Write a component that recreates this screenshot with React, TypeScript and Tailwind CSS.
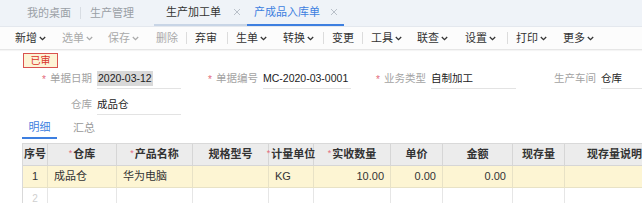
import React from "react";

const F = { fontFamily: '"Liberation Sans", "Noto Sans CJK SC", sans-serif' };

function Chev() {
  return (
    <svg width="7" height="5" viewBox="0 0 7 5" className="ml-[2px] mt-[1px]">
      <path d="M0.8 1 L3.5 3.7 L6.2 1" fill="none" stroke="currentColor" strokeWidth="1.3" />
    </svg>
  );
}

function X() {
  return (
    <svg width="8" height="8" viewBox="0 0 8 8">
      <path d="M1 1 L7 7 M7 1 L1 7" stroke="#b9c0c9" strokeWidth="1" />
    </svg>
  );
}

type TB = { t: string; c?: boolean; dis?: boolean; sepAfter?: boolean; w: number };

const tools: TB[] = [
  { t: "新增", c: true, w: 47 },
  { t: "选单", c: true, dis: true, w: 46 },
  { t: "保存", c: true, dis: true, w: 48 },
  { t: "删除", dis: true, w: 32, sepAfter: true },
  { t: "弃审", w: 34, sepAfter: true },
  { t: "生单", c: true, w: 47 },
  { t: "转换", c: true, w: 42, sepAfter: true },
  { t: "变更", w: 32, sepAfter: true },
  { t: "工具", c: true, w: 46 },
  { t: "联查", c: true, w: 48 },
  { t: "设置", c: true, w: 44, sepAfter: true },
  { t: "打印", c: true, w: 47 },
  { t: "更多", c: true, w: 40 },
];

const cols: { t: string; w: number; req?: boolean }[] = [
  { t: "序号", w: 25 },
  { t: "仓库", w: 69, req: true },
  { t: "产品名称", w: 76, req: true },
  { t: "规格型号", w: 76 },
  { t: "计量单位", w: 45, req: true },
  { t: "实收数量", w: 77, req: true },
  { t: "单价", w: 52 },
  { t: "金额", w: 70 },
  { t: "现存量", w: 52 },
  { t: "现存量说明", w: 100 },
];

function Field({
  label,
  req,
  value,
  labelW,
  lineW,
  hl,
}: {
  label: string;
  req?: boolean;
  value: string;
  labelW: number;
  lineW: number;
  hl?: boolean;
}) {
  return (
    <div className="flex items-center whitespace-nowrap">
      <div className="flex items-center justify-end text-[10.5px] text-[#a3a3a3]" style={{ width: labelW }}>
        {req && <span className="text-[#e36b7b] mr-[4px] text-[10px]">*</span>}
        <span>{label}</span>
      </div>
      <div className="ml-[5px] h-[20px] border-b border-[#e3e3e3] flex items-center" style={{ width: lineW }}>
        <span className={"text-[10.5px] text-[#222] leading-[15px] " + (hl ? "bg-[#d9d9d9] px-[1px]" : "")}>{value}</span>
      </div>
    </div>
  );
}

export default function App() {
  return (
    <div className="w-[642px] h-[203px] overflow-hidden bg-white relative whitespace-nowrap" style={F}>
      {/* tab bar */}
      <div className="h-[27px] bg-[#eff3f8] flex items-end text-[11px] leading-[14px] border-b border-[#e4e8ee]">
        <div className="flex items-center h-[26px] pl-[27px]">
          <span className="text-[#9aa0a6]">我的桌面</span>
          <span className="mx-[9px] w-px h-[12px] bg-[#d8dde3]" />
          <span className="text-[#9aa0a6]">生产管理</span>
        </div>
        <div className="flex items-center h-[26px] ml-[20px] pl-[12px] w-[93px] border-b-2 border-[#c8d5e6]">
          <span className="text-[#333]">生产加工单</span>
          <span className="ml-[12px] flex"><X /></span>
        </div>
        <div className="flex items-center h-[26px] pl-[7px] w-[97px] border-b-2 border-[#3d7fe0]">
          <span className="text-[#3d7fe0]">产成品入库单</span>
          <span className="ml-[10px] flex"><X /></span>
        </div>
      </div>
      {/* toolbar */}
      <div className="h-[23px] bg-[#fcfcfc] flex items-center pl-[15px] text-[11px] leading-[14px] border-b border-[#e6e6e6] shadow-[0_1px_1px_rgba(0,0,0,0.04)]">
        {tools.map((b, i) => (
          <React.Fragment key={i}>
            <div className="flex items-center" style={{ width: b.w }}>
              <span className={b.dis ? "text-[#aaaaaa] flex items-center" : "text-[#333] flex items-center"}>
                {b.t}
                {b.c && <Chev />}
              </span>
            </div>
            {b.sepAfter && <span className="w-px h-[12px] bg-[#dcdcdc] mr-[8px] -ml-[2px]" />}
          </React.Fragment>
        ))}
      </div>
      {/* status badge */}
      <div className="pl-[23px] pt-[3px]">
        <div className="w-[35px] h-[15px] border border-[#d9534f] bg-[#fdf4d6] flex items-center justify-center text-[10px] text-[#d9342b] leading-none">
          已审
        </div>
      </div>
      {/* form */}
      <div className="flex items-center mt-[1px] pl-[28px]">
        <Field label="单据日期" req value="2020-03-12" labelW={64} lineW={84} hl />
        <div className="ml-[33px]">
          <Field label="单据编号" req value="MC-2020-03-0001" labelW={44} lineW={88} />
        </div>
        <div className="ml-[31px]">
          <Field label="业务类型" req value="自制加工" labelW={44} lineW={85} />
        </div>
        <div className="ml-[40px]">
          <Field label="生产车间" value="仓库" labelW={40} lineW={50} />
        </div>
      </div>
      <div className="flex items-center mt-[6px] pl-[28px]">
        <Field label="仓库" value="成品仓" labelW={64} lineW={84} />
      </div>
      {/* subtabs */}
      <div className="flex items-end h-[24px] pl-[22px] text-[11px] leading-[14px]">
        <div className="w-[35px] h-[22px] flex items-center justify-center text-[#3d7fe0] border-b-2 border-[#3d7fe0]">明细</div>
        <div className="ml-[16px] h-[22px] flex items-center text-[#999]">汇总</div>
      </div>
      {/* table */}
      <div className="ml-[22px] mt-[4px] border-l border-t border-[#d9d9d9]">
        <div className="flex h-[22px] bg-[#ececec]">
          {cols.map((c, i) => (
            <div
              key={i}
              className="shrink-0 flex items-center justify-center border-r border-b border-[#d6d6d6] text-[11px] font-bold text-[#333]"
              style={{ width: c.w }}
            >
              {c.req && <span className="text-[#e36b7b] text-[9px] font-normal self-start mt-[3px] mr-[1px]">*</span>}
              {c.t}
            </div>
          ))}
        </div>
        <div className="flex h-[22px] bg-[#fdf5d3]">
          {cols.map((c, i) => {
            const v = ["1", "成品仓", "华为电脑", "", "KG", "10.00", "0.00", "0.00", "", ""][i];
            const right = i >= 5 && i <= 7;
            return (
              <div
                key={i}
                className={
                  "shrink-0 flex items-center border-r border-b border-[#e8e2c6] text-[11px] text-[#333] " +
                  (i === 0 ? "justify-center" : right ? "justify-end pr-[6px] text-[10.5px]" : "pl-[6px]")
                }
                style={{ width: c.w }}
              >
                {v}
              </div>
            );
          })}
        </div>
        <div className="flex h-[22px] bg-white">
          {cols.map((c, i) => (
            <div
              key={i}
              className="shrink-0 flex items-center justify-center border-r border-b border-[#e6e6e6] text-[10px] text-[#cfcfcf]"
              style={{ width: c.w }}
            >
              {i === 0 ? "2" : ""}
            </div>
          ))}
        </div>
      </div>
    </div>
  );
}
